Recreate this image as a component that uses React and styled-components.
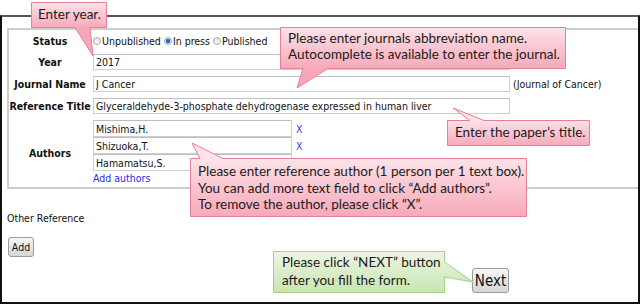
import React, { useId } from 'react';
import styled, { createGlobalStyle } from 'styled-components';

const GlobalStyle = createGlobalStyle`
  html, body { margin: 0; padding: 0; background: #fff; }
  * { box-sizing: border-box; }
`;

const FORM_FONT = `"DejaVu Sans", Tahoma, sans-serif`;
const NOTE_FONT = `Lato, "Open Sans", sans-serif`;

const Page = styled.div`
  position: relative;
  width: 640px;
  height: 304px;
  padding-top: 15px;
  overflow: hidden;
  font-family: ${FORM_FONT};
  font-stretch: condensed;
  font-size: 10.5px;
  color: #111;
`;

const Frame = styled.div`
  height: 289px;
  border: 2px solid #111;
  border-top-color: #555;
  padding: 11px 0 0 5px;
  overflow: hidden;
`;

const Fieldset = styled.div`
  border: 2px solid #cdcdcd;
  border-right: none;
  padding: 0 0 0 0;
`;

const Row = styled.div`
  display: grid;
  grid-template-columns: 82px 1fr;
  column-gap: 2px;
  align-items: center;
  height: ${(p) => p.$h}px;
`;

const Label = styled.div`
  font-weight: bold;
  text-align: center;
  white-space: nowrap;
`;

const Field = styled.div`
  display: flex;
  align-items: center;
  white-space: nowrap;
`;

const TextBox = styled.input`
  width: ${(p) => p.$w}px;
  height: ${(p) => p.$hgt || 16}px;
  border: 1px solid #cfcfcf;
  border-top-color: #bdbdbd;
  padding: 0 2px;
  margin: 0;
  font: inherit;
  color: #111;
  background: #fff;
  outline: none;
`;

const Radio = styled.span`
  display: inline-block;
  width: 8px;
  height: 8px;
  border-radius: 50%;
  border: 1px solid #a9a9a9;
  background: ${(p) =>
    p.$on ? 'radial-gradient(circle, #1c6fb8 0 2px, #dfe8f0 2.5px)' : 'linear-gradient(#e4e4e4, #f8f8f8)'};
  margin-right: 1px;
`;

const Choice = styled.label`
  display: inline-flex;
  align-items: center;
  margin-right: 3px;
`;

const Hint = styled.span`
  margin-left: 3px;
`;

const AuthorsRow = styled.div`
  display: grid;
  grid-template-columns: 82px 1fr;
  column-gap: 2px;
  align-items: center;
  padding: 3px 0 2px;
`;

const AuthorList = styled.div`
  display: flex;
  flex-direction: column;
`;

const AuthorLine = styled.div`
  display: flex;
  align-items: center;
  height: 17px;
`;

const Remove = styled.span`
  color: #3a3af0;
  margin-left: 4px;
`;

const AddLink = styled.span`
  color: #2a2ae8;
  line-height: 14px;
`;

const Other = styled.div`
  margin-top: 22px;
  line-height: 14px;
`;

const Button = styled.button`
  font-family: ${FORM_FONT};
  font-stretch: condensed;
  font-size: ${(p) => p.$fs}px;
  width: ${(p) => p.$w}px;
  height: ${(p) => p.$h}px;
  padding: 0;
  color: #111;
  border: 1px solid #9a9a9a;
  border-radius: 3px;
  background: linear-gradient(#f6f6f6, #d6d6d6);
`;

const AddRow = styled.div`
  margin-top: 12px;
  padding-left: 1px;
`;

const NextRow = styled.div`
  margin-top: 11px;
  padding-left: 465px;
`;

const Callout = styled.div`
  position: absolute;
  left: ${(p) => p.$x}px;
  top: ${(p) => p.$y}px;
  width: ${(p) => p.$w}px;
  height: ${(p) => p.$h}px;
  font-family: ${NOTE_FONT};
  font-stretch: normal;
  font-size: 13.5px;
  line-height: ${(p) => p.$lh}px;
  padding: ${(p) => p.$pad};
  color: #1b1b1b;
  white-space: nowrap;
`;

const BubbleSvg = styled.svg`
  position: absolute;
  left: 0;
  top: 0;
  overflow: visible;
  z-index: -1;
`;

const NoteText = styled.div`
  position: relative;
`;

const TONES = {
  pink: { top: '#fde3e9', bottom: '#f7a8b8', stroke: '#e58196' },
  green: { top: '#edf6e4', bottom: '#c8e5b1', stroke: '#a3d18b' },
};

function bubblePath(w, h, t) {
  const r = w - 0.5;
  const b = h - 0.5;
  let d = 'M0.5 0.5';
  if (t.edge === 'top') d += ` L${t.a} 0.5 L${t.tip[0]} ${t.tip[1]} L${t.b} 0.5`;
  d += ` L${r} 0.5`;
  if (t.edge === 'right') d += ` L${r} ${t.a} L${t.tip[0]} ${t.tip[1]} L${r} ${t.b}`;
  d += ` L${r} ${b}`;
  if (t.edge === 'bottom') d += ` L${t.b} ${b} L${t.tip[0]} ${t.tip[1]} L${t.a} ${b}`;
  d += ` L0.5 ${b} Z`;
  return d;
}

function Note({ x, y, w, h, tail, tone = 'pink', lh, pad, children }) {
  const id = useId().replace(/:/g, '');
  const c = TONES[tone];
  return (
    <Callout $x={x} $y={y} $w={w} $h={h} $lh={lh} $pad={pad}>
      <BubbleSvg width={w} height={h}>
        <defs>
          <linearGradient id={id} x1="0" y1="0" x2="0" y2={h} gradientUnits="userSpaceOnUse">
            <stop offset="0" stopColor={c.top} />
            <stop offset="1" stopColor={c.bottom} />
          </linearGradient>
        </defs>
        <path d={bubblePath(w, h, tail)} fill={`url(#${id})`} stroke={c.stroke} strokeWidth="1" />
      </BubbleSvg>
      <NoteText>{children}</NoteText>
    </Callout>
  );
}

const Overlay = styled.div`
  position: absolute;
  inset: 0;
  z-index: 1;
  isolation: isolate;
  pointer-events: none;
`;

const authors = ['Mishima,H.', 'Shizuoka,T.', 'Hamamatsu,S.'];

export default function App() {
  return (
    <>
      <GlobalStyle />
      <Page>
        <Frame>
          <Fieldset>
            <Row $h={21}>
              <Label>Status</Label>
              <Field>
                <Choice><Radio />Unpublished</Choice>
                <Choice><Radio $on />In press</Choice>
                <Choice><Radio />Published</Choice>
              </Field>
            </Row>
            <Row $h={22}>
              <Label>Year</Label>
              <Field><TextBox $w={417} defaultValue="2017" /></Field>
            </Row>
            <Row $h={22}>
              <Label>Journal Name</Label>
              <Field>
                <TextBox $w={417} defaultValue="J Cancer" />
                <Hint>(Journal of Cancer)</Hint>
              </Field>
            </Row>
            <Row $h={22}>
              <Label>Reference Title</Label>
              <Field>
                <TextBox $w={417} defaultValue="Glyceraldehyde-3-phosphate dehydrogenase expressed in human liver" />
              </Field>
            </Row>
            <AuthorsRow>
              <Label>Authors</Label>
              <AuthorList>
                {authors.map((a) => (
                  <AuthorLine key={a}>
                    <TextBox $w={199} $hgt={17} defaultValue={a} />
                    <Remove>X</Remove>
                  </AuthorLine>
                ))}
                <AddLink>Add authors</AddLink>
              </AuthorList>
            </AuthorsRow>
          </Fieldset>
          <Other>Other Reference</Other>
          <AddRow>
            <Button $w={26} $h={20} $fs={10.5}>Add</Button>
          </AddRow>
          <NextRow>
            <Button $w={37} $h={25} $fs={15}>Next</Button>
          </NextRow>
        </Frame>
        <Overlay>
          <Note x={31} y={2} w={76} h={26} lh={24} pad="0 0 0 7px"
            tail={{ edge: 'bottom', a: 44, b: 59, tip: [62, 54] }}>
            Enter year.
          </Note>
          <Note x={280} y={27} w={286} h={42} lh={16} pad="3px 0 0 8px"
            tail={{ edge: 'bottom', a: 23, b: 48, tip: [17, 61] }}>
            Please enter journals abbreviation name.<br />
            Autocomplete is available to enter the journal.
          </Note>
          <Note x={447} y={120} w={143} h={26} lh={24} pad="0 0 0 8px"
            tail={{ edge: 'top', a: 23, b: 37, tip: [6, -12] }}>
            Enter the paper’s title.
          </Note>
          <Note x={190} y={158} w={337} h={59} lh={16.5} pad="5px 0 0 8px"
            tail={{ edge: 'top', a: 10, b: 33, tip: [2, -15] }}>
            Please enter reference author (1 person per 1 text box).<br />
            You can add more text field to click “Add authors”.<br />
            To remove the author, please click “X”.
          </Note>
          <Note x={273} y={251} w={172} h={42} lh={18} pad="2px 0 0 9px" tone="green"
            tail={{ edge: 'right', a: 11, b: 26, tip: [200, 31] }}>
            Please click “NEXT” button<br />
            after you fill the form.
          </Note>
        </Overlay>
      </Page>
    </>
  );
}
